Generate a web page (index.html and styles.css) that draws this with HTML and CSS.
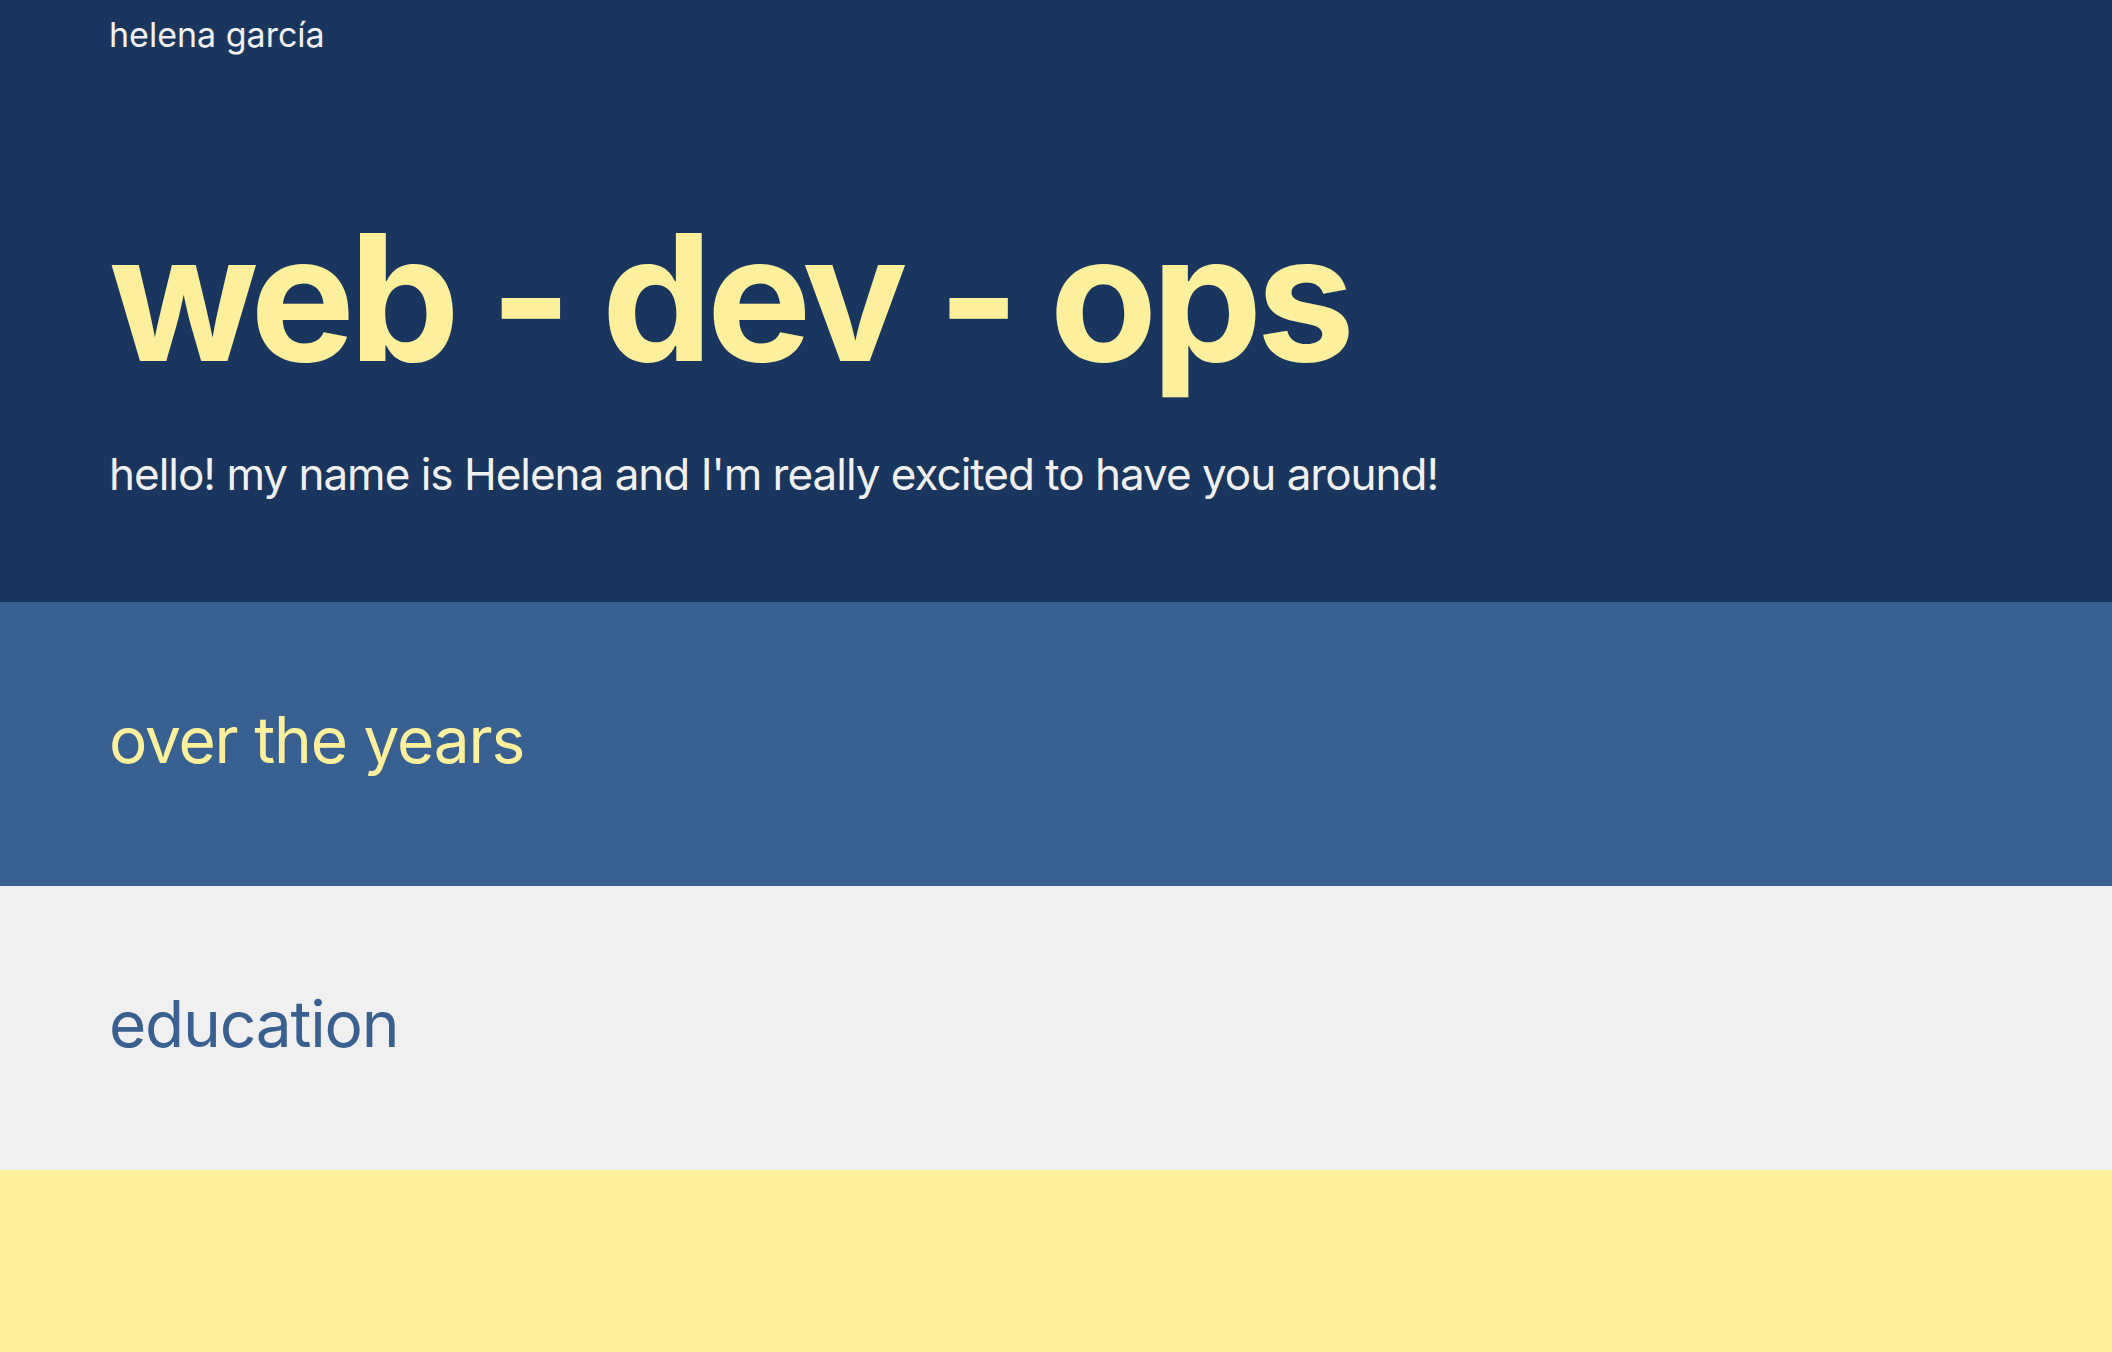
FILE: index.html
```html
<!DOCTYPE html>
<html lang="en">
<head>
<meta charset="utf-8">
<title>helena garcía</title>
<link rel="stylesheet" href="styles.css">
</head>
<body>
<header class="hero">
  <div class="brand">helena garcía</div>
  <h1 class="hero-title">web - dev - ops</h1>
  <p class="hero-intro">hello! my name is Helena and I'm really excited to have you around!</p>
</header>
<section class="band band-blue">
  <h2 class="band-title">over the years</h2>
</section>
<section class="band band-gray">
  <h2 class="band-title">education</h2>
</section>
<section class="band band-yellow"></section>
</body>
</html>
```
FILE: styles.css
```css
* { box-sizing: border-box; }
html, body { margin: 0; padding: 0; }
body {
  font-family: Inter, "Noto Sans", "Liberation Sans", sans-serif;
  background: #fcf09d;
}
.hero {
  background: #19365f;
  height: 602px;
  padding: 15px 109px 0;
  display: flex;
  flex-direction: column;
}
.brand {
  color: #f0f0f0;
  font-size: 34px;
  line-height: 40px;
}
.hero-title {
  margin: 135px 0 0;
  color: #fcf09d;
  font-size: 176px;
  font-weight: 700;
  line-height: 213px;
  letter-spacing: -6px;
}
.hero-intro {
  margin: 45px 0 0;
  color: #f0f0f0;
  font-size: 44px;
  line-height: 53px;
  letter-spacing: -1px;
}
.band {
  height: 284px;
  padding: 99px 109px 0;
}
.band-blue { background: #386091; }
.band-gray { background: #f0f0f0; }
.band-yellow { background: #fcf09d; height: 182px; }
.band-title {
  margin: 0;
  font-size: 64px;
  font-weight: 400;
  line-height: 78px;
  letter-spacing: -1.2px;
}
.band-blue .band-title { color: #fcf09d; }
.band-gray .band-title { color: #386091; }
```
